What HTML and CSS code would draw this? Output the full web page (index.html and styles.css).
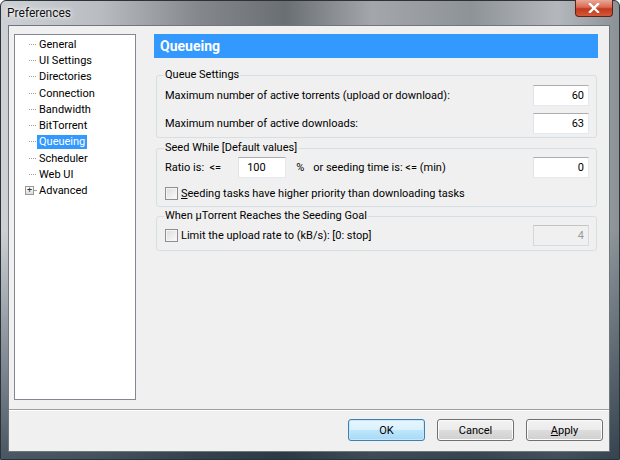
FILE: index.html
```html
<!DOCTYPE html>
<html>
<head>
<meta name="viewport" content="width=device-width, initial-scale=1">
<link rel="stylesheet" href="styles.css">
</head>
<body>
<div class="window">
  <div class="titlebar">
    <span class="title">Preferences</span>
    <span class="close"><svg width="12" height="10" viewBox="0 0 12 10"><path d="M2 1 L10 9 M10 1 L2 9" stroke="#fff" stroke-width="2.4" stroke-linecap="square"/></svg></span>
  </div>

  <div class="client">
    <div class="main">
      <ul class="tree">
        <li><span class="branch"></span>General</li>
        <li><span class="branch"></span>UI Settings</li>
        <li><span class="branch"></span>Directories</li>
        <li><span class="branch"></span>Connection</li>
        <li><span class="branch"></span>Bandwidth</li>
        <li><span class="branch"></span>BitTorrent</li>
        <li class="selected"><span class="branch"></span><span class="label">Queueing</span></li>
        <li><span class="branch"></span>Scheduler</li>
        <li><span class="branch"></span>Web UI</li>
        <li><span class="expander">+</span><span class="branch short"></span>Advanced</li>
      </ul>

      <div class="panel">
        <div class="heading">Queueing</div>

        <fieldset class="group">
          <legend>Queue Settings</legend>
          <div class="row">
            <span>Maximum number of active torrents (upload or download):</span>
            <input class="num" type="text" value="60">
          </div>
          <div class="row second">
            <span>Maximum number of active downloads:</span>
            <input class="num" type="text" value="63">
          </div>
        </fieldset>

        <fieldset class="group seed">
          <legend>Seed While [Default values]</legend>
          <div class="row">
            <span>Ratio is:&nbsp;&nbsp;&lt;=</span>
            <input class="ratio" type="text" value="100">
            <span class="pct">%</span>
            <span class="grow">or seeding time is: &lt;= (min)</span>
            <input class="num" type="text" value="0">
          </div>
          <div class="row check">
            <input type="checkbox" id="prio">
            <label for="prio"><u>S</u>eeding tasks have higher priority than downloading tasks</label>
          </div>
        </fieldset>

        <fieldset class="group goal">
          <legend>When µTorrent Reaches the Seeding Goal</legend>
          <div class="row">
            <input type="checkbox" id="limit">
            <label class="grow" for="limit">Limit the upload rate to (kB/s): [0: stop]</label>
            <input class="num" type="text" value="4" disabled>
          </div>
        </fieldset>
      </div>
    </div>

    <div class="buttons">
      <button class="default">OK</button>
      <button>Cancel</button>
      <button><u>A</u>pply</button>
    </div>
  </div>
</div>
</body>
</html>
```

FILE: styles.css
```css
body {
  margin: 0;
  background: #ffffff;
  font-family: Roboto, "Liberation Sans", sans-serif;
  font-size: 11px;
  color: #000;
}

/* Vista glass frame */
.window {
  width: 620px;
  height: 460px;
  box-sizing: border-box;
  padding: 0 9px 7px 7px;
  display: flex;
  flex-direction: column;
  border: 1px solid #2d3238;
  border-radius: 6px 6px 0 0;
  background:
    linear-gradient(to bottom, rgba(0,0,0,0) 0%, rgba(0,0,0,0) 50%, rgba(16,34,48,.7) 100%),
    linear-gradient(to right, #cdd1d5 0%, #b9bdc1 16%, #84888d 32%, #6a6f74 46%, #a3a7ab 60%, #8e9398 76%, #b4b8bc 90%, #8a9297 100%);
}

.titlebar {
  height: 24px;
  display: flex;
  justify-content: space-between;
  margin-left: -7px;
  margin-right: -3px;
  padding-left: 6px;
}

.title {
  align-self: center;
  font-size: 12px;
  color: #111;
  text-shadow: 0 0 6px #fff, 0 0 3px #fff;
}

.close {
  width: 38px;
  height: 17px;
  margin-top: -1px;
  display: flex;
  align-items: center;
  justify-content: center;
  box-sizing: border-box;
  border: 1px solid #5b2418;
  border-top: none;
  border-radius: 0 0 4px 4px;
  background: linear-gradient(to bottom, #e9a898 0%, #d86a52 45%, #c2381c 55%, #d4583a 100%);
}

.client {
  flex: 1;
  display: flex;
  flex-direction: column;
  background: #f0f0f0;
  border: 1px solid #6f767c;
}

.main {
  flex: 1;
  display: flex;
  padding: 8px 11px 9px 5px;
}

/* Left navigation tree */
.tree {
  width: 122px;
  box-sizing: border-box;
  margin: 0 18px 0 0;
  padding: 1px 0 0;
  list-style: none;
  background: #fff;
  border: 1px solid #828790;
}

.tree li {
  height: 16.3px;
  display: flex;
  align-items: center;
  white-space: nowrap;
}

.branch {
  width: 7px;
  margin: 0 3px 0 14px;
  border-top: 1px dotted #a0a0a0;
}

.branch.short {
  width: 2px;
  margin-left: 0;
}

.expander {
  width: 9px;
  height: 9px;
  margin-left: 10px;
  box-sizing: border-box;
  border: 1px solid #989898;
  background: linear-gradient(#fff, #dcdcdc);
  font-size: 9px;
  line-height: 6px;
  text-align: center;
  color: #333;
}

.selected .label {
  margin-left: -2px;
  padding: 0 2px;
  line-height: 14px;
  background: #3399ff;
  color: #fff;
}

.panel {
  flex: 1;
  display: flex;
  flex-direction: column;
}

.heading {
  height: 24px;
  line-height: 24px;
  padding-left: 6px;
  background: #3399ff;
  color: #fff;
  font-weight: bold;
  font-size: 14px;
}

/* Group boxes */
.group {
  margin: 10px 1px 0 2px;
  padding: 3px 7px 3px 8px;
  border: 1px solid #d5dfe5;
  border-radius: 3px;
}

.group.seed {
  margin-top: 3px;
  padding-top: 2px;
}

.group.goal {
  margin-top: 2px;
  padding-top: 2px;
  padding-bottom: 4px;
}

legend {
  margin-left: -1px;
  padding: 0 1px;
  line-height: 14px;
}

.row {
  height: 21px;
  display: flex;
  align-items: center;
  justify-content: space-between;
}

.row.second {
  margin-top: 7px;
}

.row.check {
  margin-top: 5px;
  height: 20px;
  justify-content: flex-start;
}

.grow {
  flex: 1;
}

input[type=text] {
  height: 21px;
  box-sizing: border-box;
  margin: 0;
  font-family: inherit;
  font-size: 11px;
  color: #000;
  background: #fff;
  border: 1px solid;
  border-color: #abadb3 #e3e9ef #e3e9ef #e2e3ea;
  outline: none;
}

input.num {
  width: 56px;
  text-align: right;
  padding: 0 4px 0 2px;
}

input.num:disabled {
  background: #f0f0f0;
  color: #9a9a9a;
  border-color: #c4c4c4 #dadada #dadada #d6d6d6;
}

input.ratio {
  width: 48px;
  margin-left: 17px;
  padding: 0 0 0 8px;
}

.pct {
  margin: 0 9px 0 10px;
}

input[type=checkbox] {
  appearance: none;
  width: 13px;
  height: 13px;
  margin: 0 3px 0 0;
  border: 1px solid #8f8f8f;
  background: linear-gradient(135deg, #dcdcdc, #fbfbfb);
  box-shadow: inset 0 0 0 1px #f4f4f4;
}

/* Dialog buttons */
.buttons {
  display: flex;
  justify-content: flex-end;
  gap: 12px;
  padding: 9px 6px 10px;
  border-top: 1px solid #a0a0a0;
  box-shadow: inset 0 1px #fff;
}

button {
  width: 77px;
  height: 22px;
  font-family: inherit;
  font-size: 11px;
  color: #000;
  border: 1px solid #707070;
  border-radius: 3px;
  background: linear-gradient(to bottom, #f2f2f2 0%, #ebebeb 50%, #dddddd 51%, #cfcfcf 100%);
  box-shadow: inset 0 0 0 1px #fcfcfc;
}

button.default {
  border-color: #3c7fb1;
  background: linear-gradient(to bottom, #eaf6fd 0%, #d9f0fc 50%, #bee6fd 51%, #a7d9f5 100%);
  box-shadow: inset 0 0 0 1px #c5e7f9;
}
```
